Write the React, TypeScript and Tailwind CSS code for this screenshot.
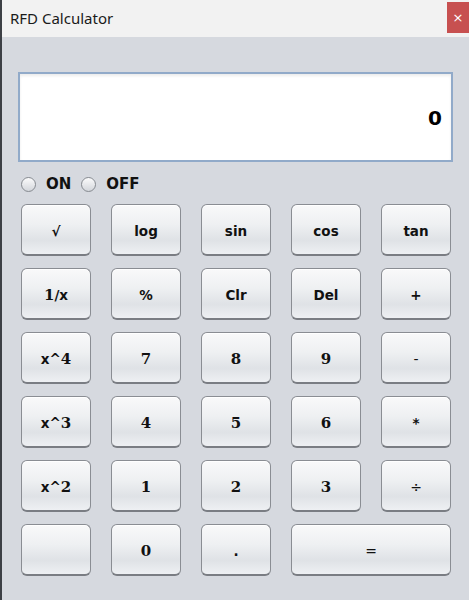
import React from 'react';

type Key = { label: string; span?: boolean; thin?: boolean };

const keys: Key[] = [
  { label: '√' }, { label: 'log' }, { label: 'sin' }, { label: 'cos' }, { label: 'tan' },
  { label: '1/x' }, { label: '%' }, { label: 'Clr' }, { label: 'Del' }, { label: '+' },
  { label: 'x^4' }, { label: '7' }, { label: '8' }, { label: '9' }, { label: '-', thin: true },
  { label: 'x^3' }, { label: '4' }, { label: '5' }, { label: '6' }, { label: '*' },
  { label: 'x^2' }, { label: '1' }, { label: '2' }, { label: '3' }, { label: '÷', thin: true },
  { label: '' }, { label: '0' }, { label: '.' }, { label: '=', span: true, thin: true },
];

// digits in the original come out in a serif face, letters in a sans one
const renderLabel = (text: string) =>
  text.split('').map((ch, i) =>
    /[0-9]/.test(ch) ? (
      <span key={i} className="font-['DejaVu_Serif',serif] text-[15px]">{ch}</span>
    ) : (
      <span key={i}>{ch}</span>
    )
  );

const CalcButton: React.FC<Key> = ({ label, span, thin }) => (
  <button
    className={`${span ? 'col-span-2' : ''} flex items-center justify-center pt-[3px] rounded-[6px] border border-[#8a8d93] border-b-2 border-b-[#7a7d83] bg-[linear-gradient(to_bottom,#f9f9fa_0%,#eef0f2_40%,#dfe2e6_72%,#eef0f3_100%)] shadow-[inset_0_1px_0_#ffffff] text-[#111] ${thin ? 'font-normal text-[14px]' : 'font-bold text-[13.5px]'} font-['DejaVu_Sans',sans-serif]`}
  >
    {renderLabel(label)}
  </button>
);

const Radio: React.FC<{ label: string }> = ({ label }) => (
  <div className="flex items-center gap-[10px]">
    <span className="w-[15px] h-[15px] rounded-full border border-[#868a90] bg-[linear-gradient(to_bottom,#fbfbfc,#d3d6db)]" />
    <span className="text-[15px] font-bold text-[#111] font-['DejaVu_Sans',sans-serif] leading-none">{label}</span>
  </div>
);

export default function App() {
  return (
    <div className="w-[469px] h-[600px] flex flex-col bg-[#d6d9df] border-l-2 border-[#3d4045] overflow-hidden">
      <div className="h-[37px] shrink-0 bg-[#f2f2f2] flex items-start justify-between">
        <span className="mt-[8px] ml-[8px] text-[15px] text-[#1a1a1a] font-['Noto_Sans',sans-serif] leading-[20px]">
          RFD Calculator
        </span>
        <div className="mt-[2px] w-[22px] h-[31px] bg-[#c75050] flex items-center justify-center text-white text-[13px] font-['DejaVu_Sans',sans-serif]">
          ×
        </div>
      </div>

      <div className="flex flex-col pl-[16px] pt-[35px]">
        <div className="w-[435px] h-[90px] border-2 border-[#91aac9] bg-white shadow-[inset_0_2px_3px_rgba(0,0,0,0.08)] flex items-center justify-end pr-[9px]">
          <span className="text-[20px] font-bold text-black font-['DejaVu_Sans',sans-serif] mt-[2px]">0</span>
        </div>

        <div className="flex items-center gap-[10px] ml-[3px] mt-[14px] h-[16px]">
          <Radio label="ON" />
          <Radio label="OFF" />
        </div>

        <div className="ml-[3px] mt-[12px] grid grid-cols-[repeat(5,70px)] auto-rows-[52px] gap-x-[20px] gap-y-[12px]">
          {keys.map((k, i) => (
            <CalcButton key={i} {...k} />
          ))}
        </div>
      </div>
    </div>
  );
}
